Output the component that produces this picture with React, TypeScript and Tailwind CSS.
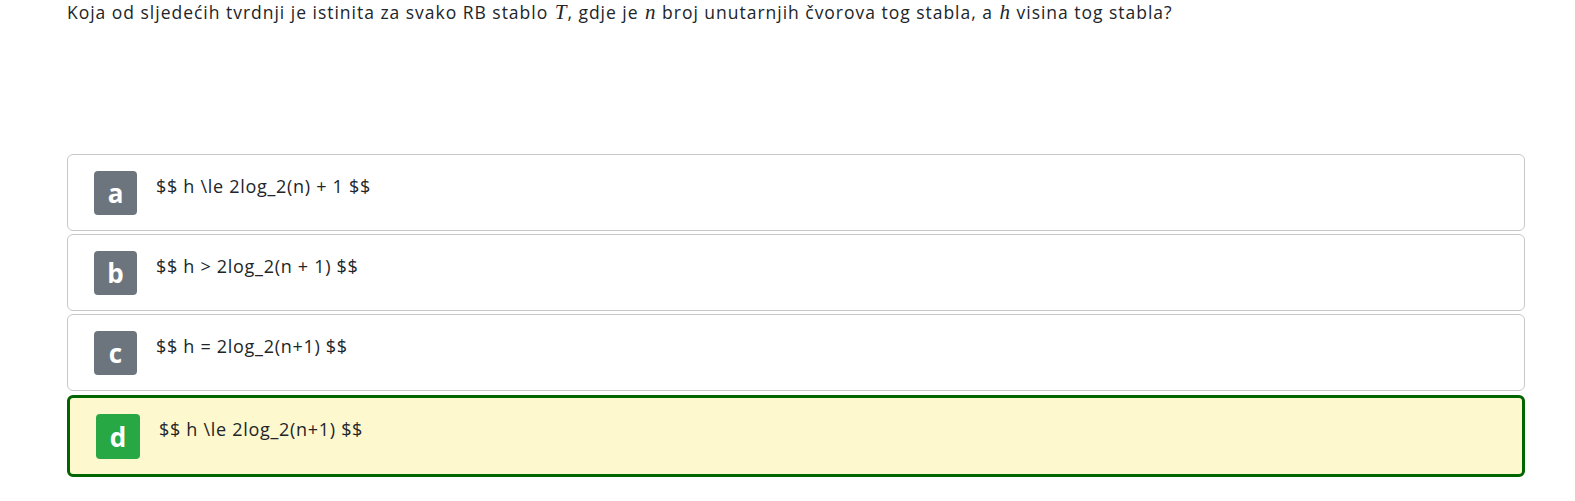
import React from "react";

const options = [
  { letter: "a", text: "$$ h \\le 2log_2(n) + 1 $$", correct: false },
  { letter: "b", text: "$$ h > 2log_2(n + 1) $$", correct: false },
  { letter: "c", text: "$$ h = 2log_2(n+1) $$", correct: false },
  { letter: "d", text: "$$ h \\le 2log_2(n+1) $$", correct: true },
];

function M({ children }: { children: React.ReactNode }) {
  return (
    <span className="italic text-[21px] tracking-normal px-[1px]" style={{ fontFamily: '"Liberation Serif", serif' }}>
      {children}
    </span>
  );
}

export default function App() {
  return (
    <div
      className="w-[1575px] h-[501px] bg-white text-[#212529] px-[67px] pt-[0px]"
      style={{ fontFamily: '"Open Sans", "Noto Sans", sans-serif' }}
    >
      <p className="text-[17.5px] leading-[24px] tracking-[0.98px]">
        Koja od sljedećih tvrdnji je istinita za svako RB stablo <M>T</M>, gdje je <M>n</M> broj unutarnjih čvorova tog stabla, a <M>h</M> visina tog stabla?
      </p>
      <div className="mt-[130px] flex flex-col gap-[3px] w-[1458px]">
        {options.map((o) =>
          o.correct ? (
            <div
              key={o.letter}
              className="flex items-start border-[3px] border-[#006400] bg-[#fdf8cd] rounded-[6px] pl-[26px] pt-[16px] pb-[15px] mt-[1px]"
            >
              <div className="w-[44px] h-[45px] rounded-[4px] bg-[#28a745] text-white font-bold text-[26px] flex items-center justify-center leading-none">
                {o.letter}
              </div>
              <div className="ml-[19px] text-[18px] leading-[26px] pt-[2px] tracking-[0.7px]">{o.text}</div>
            </div>
          ) : (
            <div
              key={o.letter}
              className="flex items-start border border-[#c8c8c8] bg-white rounded-[6px] pl-[26px] pt-[16px] pb-[15px]"
            >
              <div className="w-[43px] h-[44px] rounded-[4px] bg-[#6c757d] text-white font-bold text-[26px] flex items-center justify-center leading-none">
                {o.letter}
              </div>
              <div className="ml-[19px] text-[18px] leading-[26px] pt-[2px] tracking-[0.7px]">{o.text}</div>
            </div>
          )
        )}
      </div>
    </div>
  );
}
